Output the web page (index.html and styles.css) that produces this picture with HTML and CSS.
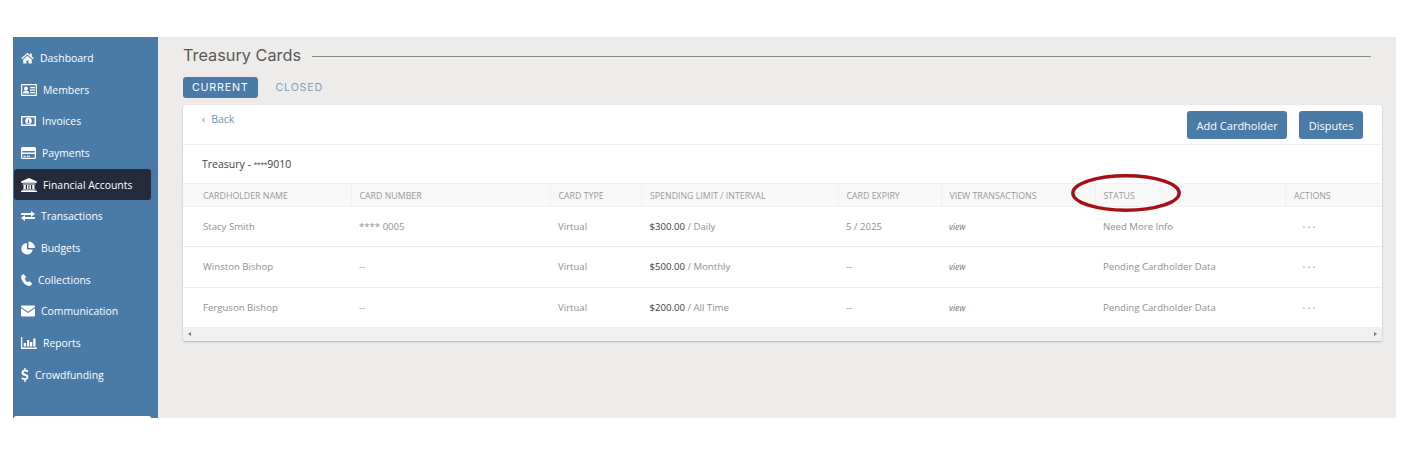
FILE: index.html
```html
<!DOCTYPE html>
<html lang="en">
<head>
<meta charset="utf-8">
<title>Treasury Cards</title>
<link rel="stylesheet" href="styles.css">
</head>
<body>
<div class="app">
  <nav class="sidebar">
    <a class="nav-item"><svg class="ic w13" viewBox="0 0 26 24"><path d="M13 1.500 0.500 12.500l1.800 2L13 5.200l10.700 9.300 1.800-2-4-3.500V3h-3.500v3z"/><path d="M13 7.400 4.500 14.800V23h6.500v-6h4v6h6.500v-8.200z"/></svg><span>Dashboard</span></a>
    <a class="nav-item"><svg class="ic w16" viewBox="0 0 32 26"><path fill-rule="evenodd" d="M2 1h28a2 2 0 0 1 2 2v20a2 2 0 0 1-2 2H2a2 2 0 0 1-2-2V3a2 2 0 0 1 2-2zm.5 2.500v19h27v-19z"/><circle cx="10" cy="10" r="4"/><path d="M4 20c0-4 2-6 6-6s6 2 6 6zM18 7h10v2.500H18zM18 12h10v2.500H18zM18 17h10v2.500H18z"/></svg><span>Members</span></a>
    <a class="nav-item"><svg class="ic w15" viewBox="0 0 30 22"><path fill-rule="evenodd" d="M1 1h28a1 1 0 0 1 1 1v18a1 1 0 0 1-1 1H1a1 1 0 0 1-1-1V2a1 1 0 0 1 1-1zm2 3v14h24V4z"/><path fill-rule="evenodd" d="M15 4.500a6.500 6.500 0 1 1 0 13 6.500 6.500 0 0 1 0-13zM14 8v6h-1.500v1.500h5V14H16V8z"/></svg><span>Invoices</span></a>
    <a class="nav-item"><svg class="ic w15" viewBox="0 0 30 24"><path fill-rule="evenodd" d="M3 0h24a3 3 0 0 1 3 3v18a3 3 0 0 1-3 3H3a3 3 0 0 1-3-3V3a3 3 0 0 1 3-3zM2.500 8v3h25V8zM2.500 14v7.500h25V14zM5 17.500h5v2H5zM12 17.500h6v2h-6z"/></svg><span>Payments</span></a>
    <a class="nav-item active"><svg class="ic w16" viewBox="0 0 32 28"><path d="M16 0 0 7v2.500h32V7zM3 11h26v2H3zM5 14h4.500v8H5zM12 14h3v8h-3zM17 14h3v8h-3zM22.500 14H27v8h-4.500zM3 23h26v2H3zM0 25.500h32V28H0z"/></svg><span>Financial Accounts</span></a>
    <a class="nav-item"><svg class="ic w14" viewBox="0 0 28 20"><path d="M0 4h20V0l8 6-8 6V8H0zM28 12v4H8v4l-8-6 8-6v4z"/></svg><span>Transactions</span></a>
    <a class="nav-item"><svg class="ic w14" viewBox="0 0 28 26"><path d="M12 3a11.500 11.500 0 1 0 11.500 13H12z"/><path d="M15 0v13h13A13 13 0 0 0 15 0z"/></svg><span>Budgets</span></a>
    <a class="nav-item"><svg class="ic w11" viewBox="0 0 22 24"><path d="M5.500 0 1.500 2.500C-.5 5 0 9.500 3 14.500s8 8.500 13 9.500l4.500-1.500 1.500-4-5.500-4.500-3.500 2.500c-2-.5-5-5-5.500-7.500l3-2.500z"/></svg><span>Collections</span></a>
    <a class="nav-item"><svg class="ic w14" viewBox="0 0 28 24"><path d="M1.500 1h25A1.500 1.500 0 0 1 28 2.500V4L14 13.500 0 4V2.500A1.500 1.500 0 0 1 1.500 1z"/><path d="M0 6.500V21.500A1.500 1.500 0 0 0 1.500 23h25a1.500 1.500 0 0 0 1.500-1.500V6.500L14 16z"/></svg><span>Communication</span></a>
    <a class="nav-item"><svg class="ic w16" viewBox="0 0 32 24"><path d="M0 0h2.500v21H32v3H0zM5.500 12H10v7H5.500zM12 6h4.500v13H12zM18 10h4.500v9H18zM24.500 3H29v16h-4.500z"/></svg><span>Reports</span></a>
    <a class="nav-item"><svg class="ic w8" viewBox="0 0 16 30"><path d="M6.500 0h3v3.600c2.300.3 4.200 1 5.500 2L13.400 9C11.800 8 10 7.400 8 7.400c-2 0-3 .8-3 2 0 3.200 10.500 2.500 10.500 9.600 0 3.400-2.300 5.800-6 6.400V30h-3v-4.500c-2.600-.2-4.900-1.100-6.500-2.400l1.800-3.400c1.700 1.300 3.900 2.200 6 2.200 2.100 0 3.400-.9 3.400-2.300C10.700 16.300.5 17 .5 10c0-3.200 2.300-5.700 6-6.300z"/></svg><span>Crowdfunding</span></a>
    <div class="nav-foot"></div>
  </nav>

  <main class="content">
    <div class="title-row">
      <h1 class="title">Treasury Cards</h1>
      <div class="title-line"></div>
    </div>
    <div class="tabs">
      <a class="tab current">CURRENT</a>
      <a class="tab">CLOSED</a>
    </div>
    <section class="card">
      <div class="card-top">
        <a class="back"><span class="chev">‹</span>Back</a>
        <div class="actions">
          <a class="btn">Add Cardholder</a>
          <a class="btn">Disputes</a>
        </div>
      </div>
      <div class="account"><span>Treasury - <span class="stars">****</span>9010</span></div>
      <table class="cards">
        <colgroup>
          <col class="c1"><col class="c2"><col class="c3"><col class="c4"><col class="c5"><col class="c6"><col class="c7"><col class="c8">
        </colgroup>
        <thead>
          <tr><th>CARDHOLDER NAME</th><th>CARD NUMBER</th><th>CARD TYPE</th><th>SPENDING LIMIT / INTERVAL</th><th>CARD EXPIRY</th><th>VIEW TRANSACTIONS</th><th>STATUS</th><th>ACTIONS</th></tr>
        </thead>
        <tbody>
          <tr><td>Stacy Smith</td><td>**** 0005</td><td>Virtual</td><td><b>$300.00</b> / Daily</td><td>5 / 2025</td><td><i>view</i></td><td>Need More Info</td><td class="dots">•••</td></tr>
          <tr><td>Winston Bishop</td><td>--</td><td>Virtual</td><td><b>$500.00</b> / Monthly</td><td>--</td><td><i>view</i></td><td>Pending Cardholder Data</td><td class="dots">•••</td></tr>
          <tr><td>Ferguson Bishop</td><td>--</td><td>Virtual</td><td><b>$200.00</b> / All Time</td><td>--</td><td><i>view</i></td><td>Pending Cardholder Data</td><td class="dots">•••</td></tr>
        </tbody>
      </table>
      <div class="scrollbar"><span class="arrow left"></span><span class="arrow right"></span></div>
    </section>
  </main>
</div>
<svg class="oval" viewBox="0 0 110 38"><ellipse cx="55" cy="19" rx="53.200" ry="17.200"/></svg>
</body>
</html>
```
FILE: styles.css
```css
* { box-sizing: border-box; }
html, body { margin: 0; height: 100%; background: #fff; }
body { padding: 37px 14px 0 13px; font-family: "Open Sans", "Liberation Sans", sans-serif; overflow: hidden; position: relative; }
.app { display: flex; height: 381px; width: 1383px; background: #edecea; }

.sidebar { width: 145px; flex: none; background: #4a7ba6; padding-top: 5px; display: flex; flex-direction: column; }
.nav-item { display: flex; align-items: center; gap: 6px; height: 31.7px; flex: none; margin: 0 7px 0 1px; padding-left: 7px; color: #fff; font-size: 10.400px; border-radius: 3px; white-space: nowrap; }
.nav-item.active { background: #252b3b; }
.ic { fill: #fff; height: 14px; flex: none; }
.w8 { width: 8px; } .w11 { width: 11px; } .w13 { width: 13px; } .w14 { width: 14px; } .w15 { width: 15px; } .w16 { width: 16px; }
.nav-foot { margin: auto 7px 0 1px; height: 2px; background: #fff; border-radius: 3px 3px 0 0; }

.content { flex: 1; min-width: 0; padding: 7px 14px 0 25px; }
.title-row { display: flex; align-items: center; gap: 11px; height: 21px; margin-right: 11px; }
.title { margin: 0; font-family: Inter, "Liberation Sans", sans-serif; font-weight: 400; font-size: 16.300px; color: #595a57; white-space: nowrap; }
.title-line { flex: 1; height: 1px; background: #8c8c87; margin-top: 3px; }

.tabs { display: flex; gap: 9px; margin-top: 12px; height: 21px; align-items: stretch; }
.tab { display: flex; align-items: center; padding: 0 9px; font-family: Inter, "Liberation Sans", sans-serif; font-size: 10.700px; letter-spacing: .8px; color: #7da0bd; border-radius: 3px; }
.tab.current { background: #4a7ba6; color: #fff; }

.card { margin-top: 7px; background: #fff; border-radius: 3px; box-shadow: 0 1px 2px rgba(0,0,0,.25); height: 236px; overflow: hidden; display: flex; flex-direction: column; }
.card-top { display: flex; justify-content: space-between; height: 40px; flex: none; border-bottom: 1px solid #f0f0ee; padding: 6px 19px 0 19px; }
.back { font-size: 10.500px; color: #6e93b0; line-height: 16px; }
.chev { margin-right: 6px; }
.actions { display: flex; gap: 12px; }
.btn { height: 28px; display: flex; align-items: center; padding: 0 9.500px; background: #4a7ba6; color: #fff; font-size: 11px; border-radius: 3px; }
.account { height: 38px; flex: none; padding: 0 19px; display: flex; align-items: center; font-size: 10.500px; color: #444; }
.stars { font-size: 6.500px; vertical-align: 1.500px; letter-spacing: -.2px; }

.cards { width: 100%; border-collapse: collapse; table-layout: fixed; flex: none; }
.c1 { width: 168px; } .c2 { width: 199px; } .c3 { width: 91.500px; } .c4 { width: 196.500px; } .c5 { width: 103px; } .c6 { width: 154px; } .c7 { width: 190.500px; } .c8 { width: 96.500px; }
.cards th { height: 23px; padding: 1px 0 0 8px; text-align: left; font-weight: 400; font-size: 8.800px; color: #9a9a9a; background: #f8f8f8; border-top: 1px solid #f0f0ee; border-bottom: 1px solid #f0f0ee; border-left: 1px solid #f0f0ee; white-space: nowrap; }
.cards th:first-child { padding-left: 20px; border-left: 0; }
.cards td { height: 40.330px; padding: 0 0 0 8px; font-size: 9.600px; color: #909090; border-bottom: 1px solid #ececea; white-space: nowrap; }
.cards td:first-child { padding-left: 20px; }
.cards tbody tr:last-child td { border-bottom: 0; }
.cards b { font-weight: 400; color: #3c3c3c; }
.cards i { font-size: 8.500px; color: #777; }
.cards .dots { font-size: 7.500px; letter-spacing: 2.200px; color: #b4b4b4; padding-left: 17px; }

.scrollbar { flex: 1; background: #f0f0f0; display: flex; justify-content: space-between; align-items: center; padding: 0 5px; }
.arrow { width: 0; height: 0; border-top: 2.500px solid transparent; border-bottom: 2.500px solid transparent; }
.arrow.left { border-right: 3px solid #777; }
.arrow.right { border-left: 3px solid #777; }

.oval { position: absolute; left: 1071px; top: 174px; width: 110px; height: 38px; fill: none; stroke: #a80f14; stroke-width: 3.400px; }
```
